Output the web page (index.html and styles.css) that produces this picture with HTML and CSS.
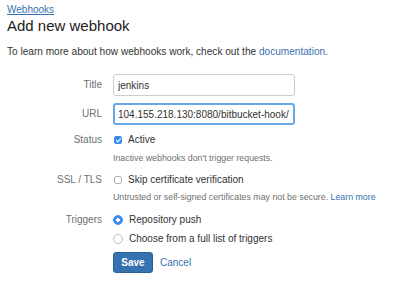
FILE: index.html
```html
<!DOCTYPE html>
<html lang="en">
<head>
    <meta charset="UTF-8">
    <title>Add new webhook</title>
    <link rel="stylesheet" href="styles.css">
</head>
<body>
    <div class="page">
        <a class="crumb" href="#">Webhooks</a>
        <h1>Add new webhook</h1>
        <p class="intro">To learn more about how webhooks work, check out the <a href="#">documentation</a>.</p>

        <form class="form">
            <div class="row row-title">
                <label class="lbl">Title</label>
                <input class="text" type="text" value="jenkins">
            </div>
            <div class="row row-url">
                <label class="lbl">URL</label>
                <input class="text focus" type="text" value="104.155.218.130:8080/bitbucket-hook/">
            </div>
            <div class="row row-status">
                <label class="lbl">Status</label>
                <div class="opts">
                    <label class="opt"><input class="check" type="checkbox" checked> Active</label>
                    <div class="help help-status">Inactive webhooks don't trigger requests.</div>
                </div>
            </div>
            <div class="row row-ssl">
                <label class="lbl">SSL / TLS</label>
                <div class="opts">
                    <label class="opt"><input class="check" type="checkbox"> Skip certificate verification</label>
                    <div class="help help-ssl">Untrusted or self-signed certificates may not be secure. <a href="#">Learn more</a></div>
                </div>
            </div>
            <div class="row row-triggers">
                <label class="lbl">Triggers</label>
                <div class="opts">
                    <label class="opt"><input class="radio" type="radio" name="trig" checked> Repository push</label>
                    <label class="opt opt-2"><input class="radio" type="radio" name="trig"> Choose from a full list of triggers</label>
                </div>
            </div>
            <div class="row row-buttons">
                <span></span>
                <div class="buttons">
                    <button class="btn" type="button">Save</button>
                    <a class="cancel" href="#">Cancel</a>
                </div>
            </div>
        </form>
    </div>
</body>
</html>
```

FILE: styles.css
```css
* {
    margin: 0;
    padding: 0;
    box-sizing: border-box;
}

body {
    background: #fff;
    color: #333;
    font-family: "Liberation Sans", Arial, sans-serif;
    font-size: 10px;
}

a {
    color: #3572b0;
    text-decoration: none;
}

.page {
    padding: 3px 7px 0;
}

/* 头部 */
.crumb {
    display: inline-block;
    line-height: 13px;
    text-decoration: underline;
}

h1 {
    font-size: 15px;
    font-weight: normal;
    line-height: 18px;
    margin-top: 1px;
    color: #222;
}

.intro {
    font-size: 10.1px;
    line-height: 14px;
    margin-top: 10px;
}

/* 表单 */
.form {
    margin-top: 15px;
}

.row {
    display: grid;
    grid-template-columns: 95px 1fr;
    column-gap: 11px;
}

.lbl {
    color: #707070;
    text-align: right;
    line-height: 14px;
}

.row-title .lbl,
.row-url .lbl {
    line-height: 22px;
}

.row-url {
    margin-top: 7px;
}

.text {
    width: 182px;
    height: 22px;
    border: 1px solid #ccc;
    border-radius: 3px;
    padding: 0 4px;
    font: 10px "Liberation Sans", Arial, sans-serif;
    color: #333;
    outline: none;
}

.text.focus {
    border: 2px solid #6aa6ea;
    padding: 0 3px;
}

.row-status {
    margin-top: 8px;
}

.opt {
    display: flex;
    align-items: center;
    gap: 6px;
    line-height: 14px;
    color: #333;
}

.check {
    appearance: none;
    width: 8px;
    height: 8px;
    margin-left: 1px;
    border: 1px solid #b5b5b5;
    border-radius: 2px;
    background: #fff;
    position: relative;
}

.check:checked {
    background: #3b8df0;
    border-color: #3b8df0;
}

.check:checked::after {
    content: "";
    position: absolute;
    left: 1.5px;
    top: 0;
    width: 2px;
    height: 4px;
    border: solid #fff;
    border-width: 0 1.2px 1.2px 0;
    transform: rotate(40deg);
}

.radio {
    appearance: none;
    width: 10px;
    height: 10px;
    border: 1px solid #bdbdbd;
    border-radius: 50%;
    background: #fff;
}

.radio:checked {
    background: radial-gradient(circle, #fff 0 1.6px, #3b8df0 2px);
    border-color: #3b8df0;
}

.help {
    font-size: 8.8px;
    line-height: 12px;
    color: #707070;
}

.help-status {
    margin-top: 5px;
}

.row-ssl {
    margin-top: 9px;
}

.help-ssl {
    margin-top: 4px;
}

.row-triggers {
    margin-top: 10px;
}

.opt-2 {
    margin-top: 5px;
}

.row-buttons {
    margin-top: 6px;
}

.buttons {
    display: flex;
    align-items: center;
    gap: 7px;
}

.btn {
    width: 40px;
    height: 21px;
    background: #3572b0;
    color: #fff;
    border: 1px solid #2a5f96;
    border-radius: 3px;
    font: bold 10px "Liberation Sans", Arial, sans-serif;
}

.cancel {
    font-size: 10px;
}
```
